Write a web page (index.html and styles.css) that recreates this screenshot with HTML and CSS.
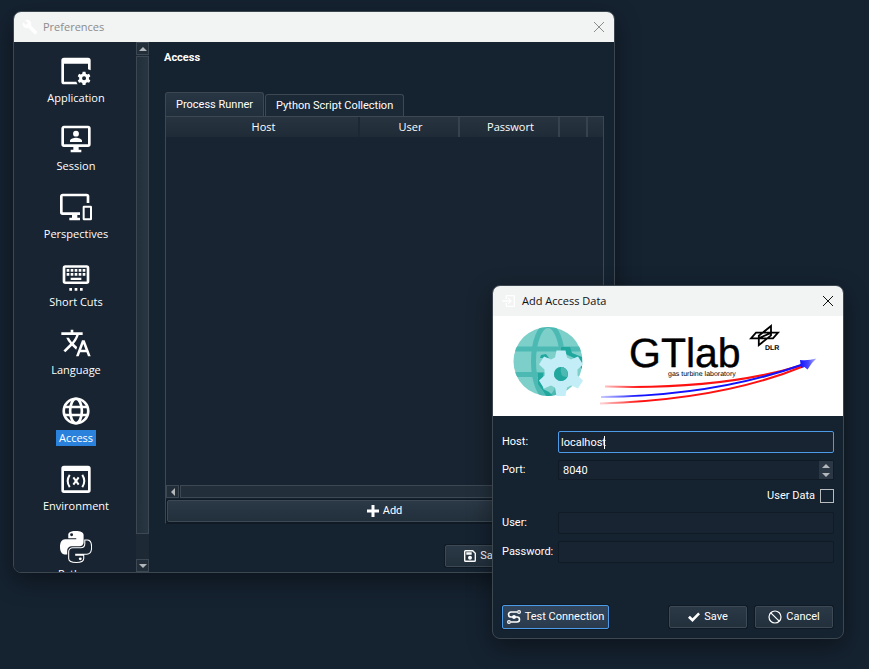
FILE: index.html
```html
<!DOCTYPE html>
<html lang="en">
<head>
<meta charset="utf-8">
<title>Preferences</title>
<link rel="stylesheet" href="styles.css">
</head>
<body>
<main class="desktop">
  <section class="window prefs" aria-label="Preferences">
    <header class="titlebar inactive">
      <svg class="title-icon" viewBox="0 0 24 24"><path fill="#fff" d="M22.7 19 13.6 9.900C14.500 7.600 14 4.900 12.100 3 10.100 1 7.100.6 4.700 1.700L9 6 6 9 1.600 4.700C.4 7.100.9 10.100 2.900 12.100c1.900 1.900 4.600 2.400 6.900 1.500l9.100 9.100c.4.4 1 .4 1.400 0l2.300-2.300c.5-.4.5-1.100.1-1.400Z"/></svg>
      <h1 class="title">Preferences</h1>
      <button class="close" aria-label="Close"><svg viewBox="0 0 12 12"><path d="M1 1 11 11M11 1 1 11"/></svg></button>
    </header>
    <div class="prefs-body">
      <nav class="side">
        <a class="item" href="#application"><svg class="icon" viewBox="0 0 24 24"><path d="M3 2h18a2 2 0 0 1 2 2v7.500a7 7 0 0 0-2-.8V6.500H3V20h9.300a7 7 0 0 0 .9 2H3a2 2 0 0 1-2-2V4a2 2 0 0 1 2-2Z"/><path fill-rule="evenodd" d="m17 12.500-.3 1.500-1 .6-1.400-.5-1 1.800 1.100 1v1.200l-1.100 1 1 1.800 1.400-.5 1 .6.3 1.500h2.100l.3-1.500 1-.6 1.400.5 1-1.800-1.100-1v-1.200l1.100-1-1-1.800-1.400.5-1-.6-.3-1.500ZM18.050 16a1.500 1.500 0 1 1 0 3 1.500 1.500 0 0 1 0-3Z"/></svg><span>Application</span></a>
        <a class="item" href="#session"><svg class="icon" viewBox="0 0 24 24"><path d="M21 16V4H3v12h18m0-14a2 2 0 0 1 2 2v12a2 2 0 0 1-2 2h-7v2h2v2H8v-2h2v-2H3a2 2 0 0 1-2-2V4c0-1.100.9-2 2-2h18M12 5.800a2.200 2.200 0 1 1 0 4.400 2.200 2.200 0 0 1 0-4.400M7.500 14.300v-1c0-1.500 3-2.300 4.500-2.300s4.500.8 4.500 2.300v1Z"/></svg><span>Session</span></a>
        <a class="item" href="#perspectives"><svg class="icon" viewBox="0 0 24 24"><path d="M23 11h-5a1 1 0 0 0-1 1v9a1 1 0 0 0 1 1h5a1 1 0 0 0 1-1v-9a1 1 0 0 0-1-1m-.5 9.500h-4v-8h4v8M20 2H2C.9 2 0 2.900 0 4v12a2 2 0 0 0 2 2h7v2H7v2h8v-2h-2v-2h2v-2H2V4h18v5h2V4a2 2 0 0 0-2-2Z"/></svg><span>Perspectives</span></a>
        <a class="item" href="#short-cuts"><svg class="icon" viewBox="0 0 24 24"><path fill-rule="evenodd" d="M4 4.700h16a2 2 0 0 1 2 2v10a2 2 0 0 1-2 2H4a2 2 0 0 1-2-2v-10a2 2 0 0 1 2-2ZM4 6.500v10.400h16V6.500Z"/><path d="M5 7.500h2v2H5zM8 7.500h2v2H8zM11 7.500h2v2h-2zM14 7.500h2v2h-2zM17 7.500h2v2h-2zM5 10.500h2v2H5zM8 10.500h2v2H8zM11 10.500h2v2h-2zM14 10.500h2v2h-2zM17 10.500h2v2h-2zM8 14h8v1.800H8zM7 21.800h2v2H7zM11 21.800h2v2h-2zM15 21.800h2v2h-2z"/></svg><span>Short Cuts</span></a>
        <a class="item" href="#language"><svg class="icon" viewBox="0 0 24 24"><path d="M12.870 15.070 10.330 12.560l.03-.03C12.100 10.590 13.340 8.360 14.070 6H17V4H10V2H8v2H1v2h11.170C11.500 7.920 10.440 9.750 9 11.350 8.070 10.320 7.300 9.190 6.690 8h-2c.73 1.630 1.730 3.170 2.980 4.560L2.580 17.580 4 19l5-5 3.110 3.110.76-2.040M18.500 10h-2L12 22h2l1.120-3h4.750L21 22h2L18.500 10m-2.620 7 1.620-4.330L19.120 17h-3.240Z"/></svg><span>Language</span></a>
        <a class="item selected" href="#access" aria-current="page"><svg class="icon line" viewBox="0 0 24 24"><circle cx="12" cy="12" r="9.200"/><ellipse cx="12" cy="12" rx="4.400" ry="9.200"/><path d="M3.500 9h17M3.500 15h17"/></svg><span>Access</span></a>
        <a class="item" href="#environment"><svg class="icon" viewBox="0 0 24 24"><path fill-rule="evenodd" d="M3 2h18a2 2 0 0 1 2 2v16.500a2 2 0 0 1-2 2H3a2 2 0 0 1-2-2V4a2 2 0 0 1 2-2ZM3 6v14.500h18V6Z"/><path class="stroke" d="M7.300 8.900c-2 3-2 6.200 0 9.200M16.700 8.900c2 3 2 6.200 0 9.200M10 10.800l4 5.400M14 10.800l-4 5.400"/></svg><span>Environment</span></a>
        <a class="item" href="#python"><svg class="icon" viewBox="0 0 24 24"><path fill-rule="evenodd" d="M11.800 0C6.500 0 6.200 2 6.200 3v2.400h6v.8H3.800C1.500 6.200 0 8.300 0 11.900s1.400 5.700 3.400 5.700h2v-2.800c0-2 1.500-3.300 3.400-3.300h5.800c1.700 0 3.100-1.400 3.100-3.100V3c0-1.900-2.400-3-5.900-3ZM8.700 1.700a1.100 1.100 0 1 1 0 2.200 1.100 1.100 0 0 1 0-2.200Z"/><path class="thin" d="M12.200 23.600c5.300 0 5.600-2 5.600-3v-2.400h-6v-.8h8.400c2.300 0 3.500-2.100 3.500-5.300s-1.200-5.300-3.200-5.300h-1.900v2.700c0 1.800-1.400 3-3.100 3H9.600c-1.700 0-3.100 1.400-3.100 3.100v5c0 1.900 2.200 3 5.700 3Z"/><circle cx="15.200" cy="20.900" r="1.100"/></svg><span>Python</span></a>
      </nav>
      <div class="vscroll" aria-hidden="true"><i class="sb"><b class="up"></b></i><i class="vthumb"></i><i class="sb last"><b class="down"></b></i></div>
      <div class="content">
        <h2 class="heading">Access</h2>
        <div class="tabs" role="tablist">
          <button class="tab active" role="tab" aria-selected="true">Process Runner</button>
          <button class="tab" role="tab" aria-selected="false">Python Script Collection</button>
        </div>
        <div class="panel">
          <div class="table-area">
            <table class="hosts">
              <colgroup><col><col class="c-user"><col class="c-pass"><col class="c-a"><col class="c-b"></colgroup>
              <thead><tr><th class="soft">Host</th><th>User</th><th>Passwort</th><th></th><th></th></tr></thead>
            </table>
          </div>
          <div class="hscroll" aria-hidden="true"><i class="sb"><b class="left"></b></i><i class="hthumb"></i><i class="sb"><b class="right"></b></i></div>
          <button class="btn add"><svg viewBox="0 0 12 12"><path d="M4.500 0h3v4.500H12v3H7.500V12h-3V7.500H0v-3h4.500Z"/></svg>Add</button>
        </div>
        <div class="actions">
          <button class="btn"><svg viewBox="0 0 12 12"><path fill-rule="evenodd" d="M1.500 0H9l3 3v7.500a1.500 1.500 0 0 1-1.500 1.500h-9A1.500 1.500 0 0 1 0 10.500v-9A1.500 1.500 0 0 1 1.500 0ZM1.400 1.400v9.200h9.200V3.600L8.400 1.400ZM2.300 2.300h5.400v2.400H2.300ZM6 5.800a2 2 0 1 1 0 4 2 2 0 0 1 0-4Z"/></svg>Save</button>
          <button class="btn">Cancel</button>
        </div>
      </div>
    </div>
  </section>

  <section class="window dialog" role="dialog" aria-label="Add Access Data">
    <header class="titlebar">
      <svg class="title-icon" viewBox="0 0 24 24"><path fill="#fff" d="M19 3H9a2 2 0 0 0-2 2v4h2V5h10v14H9v-4H7v4a2 2 0 0 0 2 2h10a2 2 0 0 0 2-2V5a2 2 0 0 0-2-2m-8.900 12.600L11.500 17l5-5-5-5-1.400 1.400 2.600 2.600H2v2h10.700Z"/></svg>
      <h2 class="title">Add Access Data</h2>
      <button class="close" aria-label="Close"><svg viewBox="0 0 12 12"><path d="M1 1 11 11M11 1 1 11"/></svg></button>
    </header>
    <svg class="banner" viewBox="493 316 350 100" role="img" aria-label="GTlab gas turbine laboratory, DLR">
      <defs>
        <clipPath id="globe"><circle cx="548" cy="361.500" r="34.500"/></clipPath>
        <linearGradient id="red" gradientUnits="userSpaceOnUse" x1="602" y1="0" x2="640" y2="0"><stop offset="0" stop-color="#f11" stop-opacity=".2"/><stop offset="1" stop-color="#f11"/></linearGradient>
        <linearGradient id="blue" gradientUnits="userSpaceOnUse" x1="600" y1="0" x2="640" y2="0"><stop offset="0" stop-color="#11f" stop-opacity=".2"/><stop offset="1" stop-color="#11f"/></linearGradient>
        <linearGradient id="tip"><stop offset="0" stop-color="#11f"/><stop offset=".5" stop-color="#44f"/><stop offset="1" stop-color="#bbf"/></linearGradient>
      </defs>
      <g clip-path="url(#globe)">
        <path fill="#7dcfca" d="M513 326h70v71h-70z"/>
        <g fill="none" stroke="#4db9b3" stroke-width="5"><path d="M513 349h70M513 374.500h50"/><ellipse cx="548" cy="361.500" rx="14.500" ry="36"/></g>
        <path fill="#20a79e" d="M561 347h9l2 6 10 4v12l-8-11-13-6ZM541 355l5-1 3 4h-9ZM538 373h5v16l6 3 5 5h-7l-9-13Z"/>
      </g>
      <path fill="#c3eef7" fill-rule="evenodd" d="m556.500 350.500h9l1.500 7 4 2 7-3 5 8-5.500 5v6l5.500 5-5 8-7-3-4 2-1.500 8.500h-9l-1.500-8.500-4-2-7 3-5-8 5.500-5v-6l-5.500-5 5-8 7 3 4-2ZM561 367a7 7 0 1 0 0 14 7 7 0 0 0 0-14Z"/>
      <circle cx="561" cy="374" r="7" fill="#20a79e"/><path fill="#4db9b3" d="M561 367a7 7 0 0 1 6 10q-8 0-6-10Z"/>
      <text class="logo-name" x="629" y="367">GTlab</text>
      <text class="logo-sub" x="668" y="376">gas turbine laboratory</text>
      <text class="logo-dlr" x="765" y="350">DLR</text>
      <path fill="none" stroke="#000" stroke-width="1.800" stroke-linejoin="miter" d="m751 338.300 5-5.600h22l-5 5.600ZM771 326l-12.200 9.800v9.400l12.200-9.800ZM759 338l12-5"/>
      <g fill="none" stroke-width="2">
        <path stroke="url(#red)" d="M605 386.500Q721 390 803 365"/>
        <path stroke="url(#red)" d="M600 403.500Q722 400 804 366"/>
        <path stroke="url(#blue)" d="M601 397Q716 396 804 364"/>
      </g>
      <path fill="url(#tip)" d="M800 360q8 1 16.500-1.500-5 4-9 11l-3-2.500-3.500 1Z"/>
    </svg>
    <form class="form">
      <label for="host">Host:</label>
      <div class="field"><input id="host" class="text focused" type="text" value="localhost"><span class="caret"></span></div>
      <label for="port">Port:</label>
      <div class="field spin"><input id="port" class="text" type="number" value="8040"><span class="steps"><button type="button" aria-label="Increase"><b class="up"></b></button><button type="button" aria-label="Decrease"><b class="down"></b></button></span></div>
      <div class="check"><label for="userdata">User Data</label><input id="userdata" type="checkbox"></div>
      <label for="user">User:</label>
      <div class="field"><input id="user" class="text" type="text" disabled></div>
      <label for="password">Password:</label>
      <div class="field"><input id="password" class="text" type="password" disabled></div>
    </form>
    <footer class="dialog-actions">
      <button class="btn primary"><svg class="wide" viewBox="0 0 14 14"><path class="conn" d="M10 2H4a2.500 2.500 0 0 0 0 5h6a2.500 2.500 0 0 1 0 5H4"/><circle class="ring" cx="12" cy="2" r="1.400"/><circle class="ring" cx="2" cy="12" r="1.400"/><circle cx="7" cy="7" r="1.900"/></svg>Test Connection</button>
      <span class="grow"></span>
      <button class="btn"><svg viewBox="0 0 12 12"><path d="m0 6.700 1.900-1.900 2.600 2.500L10.200 1.400 12 3.200 4.500 11Z"/></svg>Save</button>
      <button class="btn"><svg class="wide" viewBox="0 0 14 14"><circle class="ring" cx="7" cy="7" r="6"/><path class="ring" d="m2.800 2.800 8.400 8.400"/></svg>Cancel</button>
    </footer>
  </section>
</main>
</body>
</html>
```
FILE: styles.css
```css
* { box-sizing: border-box; }
body { margin: 0; background: #152230; color: #fff; font: 11px/16px Roboto, "Open Sans", sans-serif; }
button, input { font: inherit; color: inherit; margin: 0; }
button { padding: 0; border: 0; background: none; }
h1, h2 { margin: 0; }

.desktop { position: relative; min-height: 100vh; overflow: hidden; }
.window { position: absolute; display: flex; flex-direction: column; overflow: hidden; background: #152230; border: 1px solid #3d474f; border-radius: 8px; box-shadow: 0 8px 24px rgba(0, 0, 0, .4); }
.prefs { left: 13px; top: 11px; right: 254px; bottom: 96px; }
.dialog { right: 25px; top: 285px; left: 492px; }

.title, .item, .hosts th { font-family: "Open Sans", "Noto Sans", sans-serif; font-size: 11px; font-weight: 400; }
.titlebar { display: flex; align-items: center; height: 30px; flex: none; padding: 0 8px; background: #f2f3f3; color: #111; }
.inactive { color: #8c8c8c; }
.title-icon { width: 16px; height: 16px; margin-right: 5px; }
.title { flex: 1; }
.close { width: 14px; height: 14px; }
.close svg { display: block; width: 12px; height: 12px; margin: 1px; }
.close path { stroke: currentColor; fill: none; }

.prefs-body { display: flex; flex: 1; min-height: 0; }
.side { width: 122px; display: flex; flex-direction: column; gap: 17px; padding: 13px 0 0 2px; overflow: hidden; background: #182431; }
.item { display: flex; flex: none; flex-direction: column; align-items: center; gap: 3px; color: #fff; text-decoration: none; }
.item span { padding: 0 3px; }
.selected span { background: #2b82dc; }
.icon { width: 32px; height: 32px; fill: #fff; }
.line { fill: none; stroke: #fff; stroke-width: 2; }
.stroke { fill: none; stroke: #fff; stroke-width: 1.5; }
.thin { fill: none; stroke: #fff; stroke-width: .8; }

.vscroll { width: 13px; display: flex; flex-direction: column; background: #1d2935; }
.sb { display: grid; place-items: center; flex: none; width: 13px; height: 13px; border: 1px solid #3d4852; background: #222e3a; }
.vthumb { flex: 1; margin: 1px 0 25px; border: 1px solid #3d4852; background: linear-gradient(90deg, #22303c, #283542); }
.up, .down, .left, .right { border: 4px solid transparent; }
.up { border-top: 0; border-bottom-color: #b4b8bb; }
.down { border-bottom: 0; border-top-color: #b4b8bb; }
.left { border-left: 0; border-right-color: #b4b8bb; }
.right { border-right: 0; border-left-color: #b4b8bb; }

.content { flex: 1; min-width: 0; display: flex; flex-direction: column; padding: 8px 10px 5px 15px; }
.heading { font-size: 11px; font-weight: 700; margin-bottom: 26px; }
.tabs { display: flex; align-items: flex-end; gap: 1px; margin-left: 1px; }
.tab { height: 22px; padding: 0 10px; border: 1px solid #3d4852; border-bottom: 0; border-radius: 3px 3px 0 0; background: #1b2835; }
.tab.active { height: 24px; background: linear-gradient(#283644, #212e3b); }
.panel { flex: 1; display: flex; flex-direction: column; margin-left: 1px; border: 1px solid #3d4852; border-bottom-color: #101a24; }
.table-area { flex: 1; background: #182431; }
.hosts { width: 100%; table-layout: fixed; border-collapse: collapse; }
.c-user, .c-pass { width: 100px; }
.c-a { width: 28px; }
.c-b { width: 16px; }
.hosts th { height: 20px; padding: 0 0 0 3px; border-right: 2px solid #36424d; background: linear-gradient(#273441, #1f2b37); }
.hosts .soft { border-right-color: #1c2834; }
.hosts th:last-child { border-right: 0; }
.hscroll { display: flex; gap: 1px; height: 13px; }
.hthumb { flex: 1; border: 1px solid #3d4852; background: #222f3b; }

.btn { display: flex; align-items: center; justify-content: center; gap: 4px; min-width: 78px; height: 22px; border: 1px solid #3d4954; border-radius: 2px; background: linear-gradient(#2b3846, #22303c); box-shadow: 0 0 0 1px #101a24; }
.btn svg { width: 12px; height: 12px; fill: #fff; }
.btn .wide { width: 14px; height: 14px; }
.btn .ring, .btn .conn { fill: none; stroke: #fff; stroke-width: 1.2; }
.btn .conn { stroke-width: 1.6; }
.add { margin: 2px 1px 1px; }
.actions { display: flex; justify-content: flex-end; gap: 8px; padding: 21px 0 0; margin-right: -5px; }

.banner { display: block; width: 100%; background: #fff; text-rendering: geometricPrecision; }
.logo-name { font: 41px "Liberation Sans", sans-serif; stroke: #000; stroke-width: .4; }
.logo-sub { font: 7px "Liberation Sans", sans-serif; }
.logo-dlr { font: bold 7px "Liberation Sans", sans-serif; }

.form { display: grid; grid-template-columns: 50px 1fr; align-items: center; gap: 7px 6px; padding: 15px 9px 0; }
.field { position: relative; display: flex; }
.text { flex: 1; min-width: 0; height: 22px; padding: 0 2px; border: 1px solid #111b26; border-radius: 2px; background: #182431; outline: 0; appearance: textfield; }
.text::-webkit-inner-spin-button { appearance: none; }
.focused { border-color: #4c9be8; }
.caret { position: absolute; left: 46px; top: 5px; width: 1px; height: 13px; background: #fff; }
.spin .text { height: 20px; padding-left: 4px; }
.steps { position: absolute; right: 1px; top: 1px; bottom: 1px; width: 14px; display: grid; background: #2b3744; }
.steps button { display: grid; place-items: center; }
.check { grid-column: 1 / 3; display: flex; justify-content: flex-end; align-items: center; gap: 5px; height: 18px; }
.check input { appearance: none; width: 14px; height: 14px; border: 1px solid #b9bcbf; }
.dialog-actions { display: flex; gap: 8px; padding: 42px 10px 9px 9px; align-items: center; }
.primary { min-width: 107px; height: 24px; border-color: #4c9be8; background: linear-gradient(#32465b, #2a3b4d); }
.grow { flex: 1; }
```
